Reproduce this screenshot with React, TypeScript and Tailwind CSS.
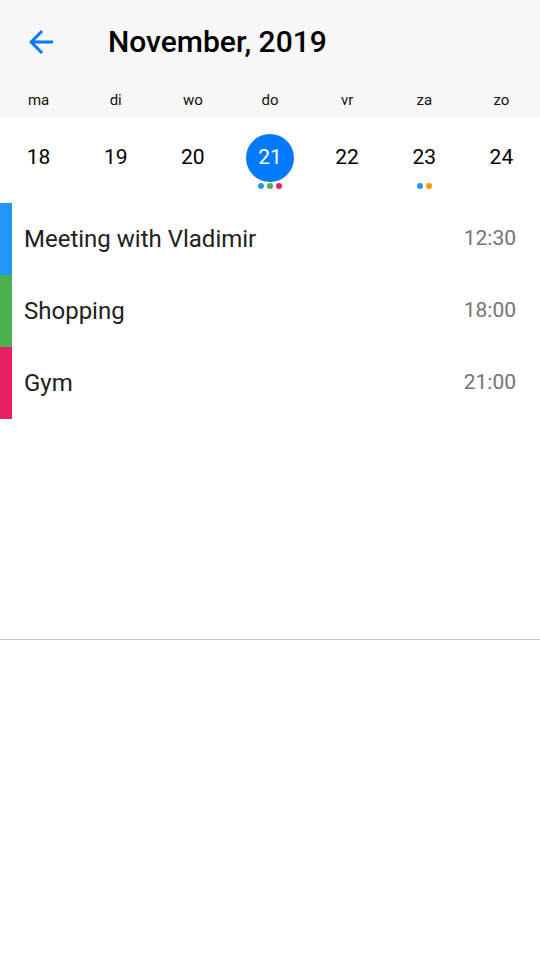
import React from 'react';

const weekdays = ['ma', 'di', 'wo', 'do', 'vr', 'za', 'zo'];

const days: { n: number; dots: string[]; active?: boolean }[] = [
  { n: 18, dots: [] },
  { n: 19, dots: [] },
  { n: 20, dots: [] },
  { n: 21, dots: ['bg-[#2196f3]', 'bg-[#4caf50]', 'bg-[#e91e63]'], active: true },
  { n: 22, dots: [] },
  { n: 23, dots: ['bg-[#2196f3]', 'bg-[#ff9800]'] },
  { n: 24, dots: [] },
];

const events = [
  { title: 'Meeting with Vladimir', time: '12:30', color: 'bg-[#2196f3]' },
  { title: 'Shopping', time: '18:00', color: 'bg-[#4caf50]' },
  { title: 'Gym', time: '21:00', color: 'bg-[#e91e63]' },
];

export default function App() {
  return (
    <div className="w-[540px] h-[960px] bg-white flex flex-col font-['Roboto',sans-serif] overflow-hidden">
      <header className="bg-[#f7f7f7] h-[118px] flex flex-col">
        <div className="h-[84px] flex items-center">
          <div className="w-[108px] pl-[23px] flex items-center">
            <svg width="36" height="36" viewBox="0 0 24 24" fill="#007aff">
              <path d="M20 11H7.83l5.59-5.59L12 4l-8 8 8 8 1.41-1.41L7.83 13H20v-2z" />
            </svg>
          </div>
          <h1 className="text-[30px] font-medium text-black leading-none">November, 2019</h1>
        </div>
        <div className="grid grid-cols-7 flex-1">
          {weekdays.map((d) => (
            <div key={d} className="flex items-center justify-center text-[15px] text-[#111] pb-[1px]">
              {d}
            </div>
          ))}
        </div>
      </header>

      <div className="grid grid-cols-7 h-[85px] pt-[16px]">
        {days.map((d) => (
          <div key={d.n} className="flex flex-col items-center">
            <div
              className={
                d.active
                  ? 'w-[48px] h-[48px] rounded-full bg-[#007aff] text-white flex items-center justify-center text-[21px]'
                  : 'w-[48px] h-[48px] flex items-center justify-center text-[21px] text-black'
              }
            >
              {d.n}
            </div>
            <div className="flex gap-[3px] mt-[1px] h-[6px]">
              {d.dots.map((c, i) => (
                <span key={i} className={`w-[6px] h-[6px] rounded-full ${c}`} />
              ))}
            </div>
          </div>
        ))}
      </div>

      <div className="h-[436px] flex flex-col">
        {events.map((e) => (
          <div key={e.title} className="h-[72px] flex items-center">
            <div className={`w-[12px] self-stretch ${e.color}`} />
            <div className="flex-1 flex items-center justify-between pl-[12px] pr-[24px]">
              <span className="text-[24px] text-[#212121]">{e.title}</span>
              <span className="text-[21px] text-[#757575]">{e.time}</span>
            </div>
          </div>
        ))}
      </div>

      <div className="h-px bg-[#c8c8c8]" />
    </div>
  );
}
